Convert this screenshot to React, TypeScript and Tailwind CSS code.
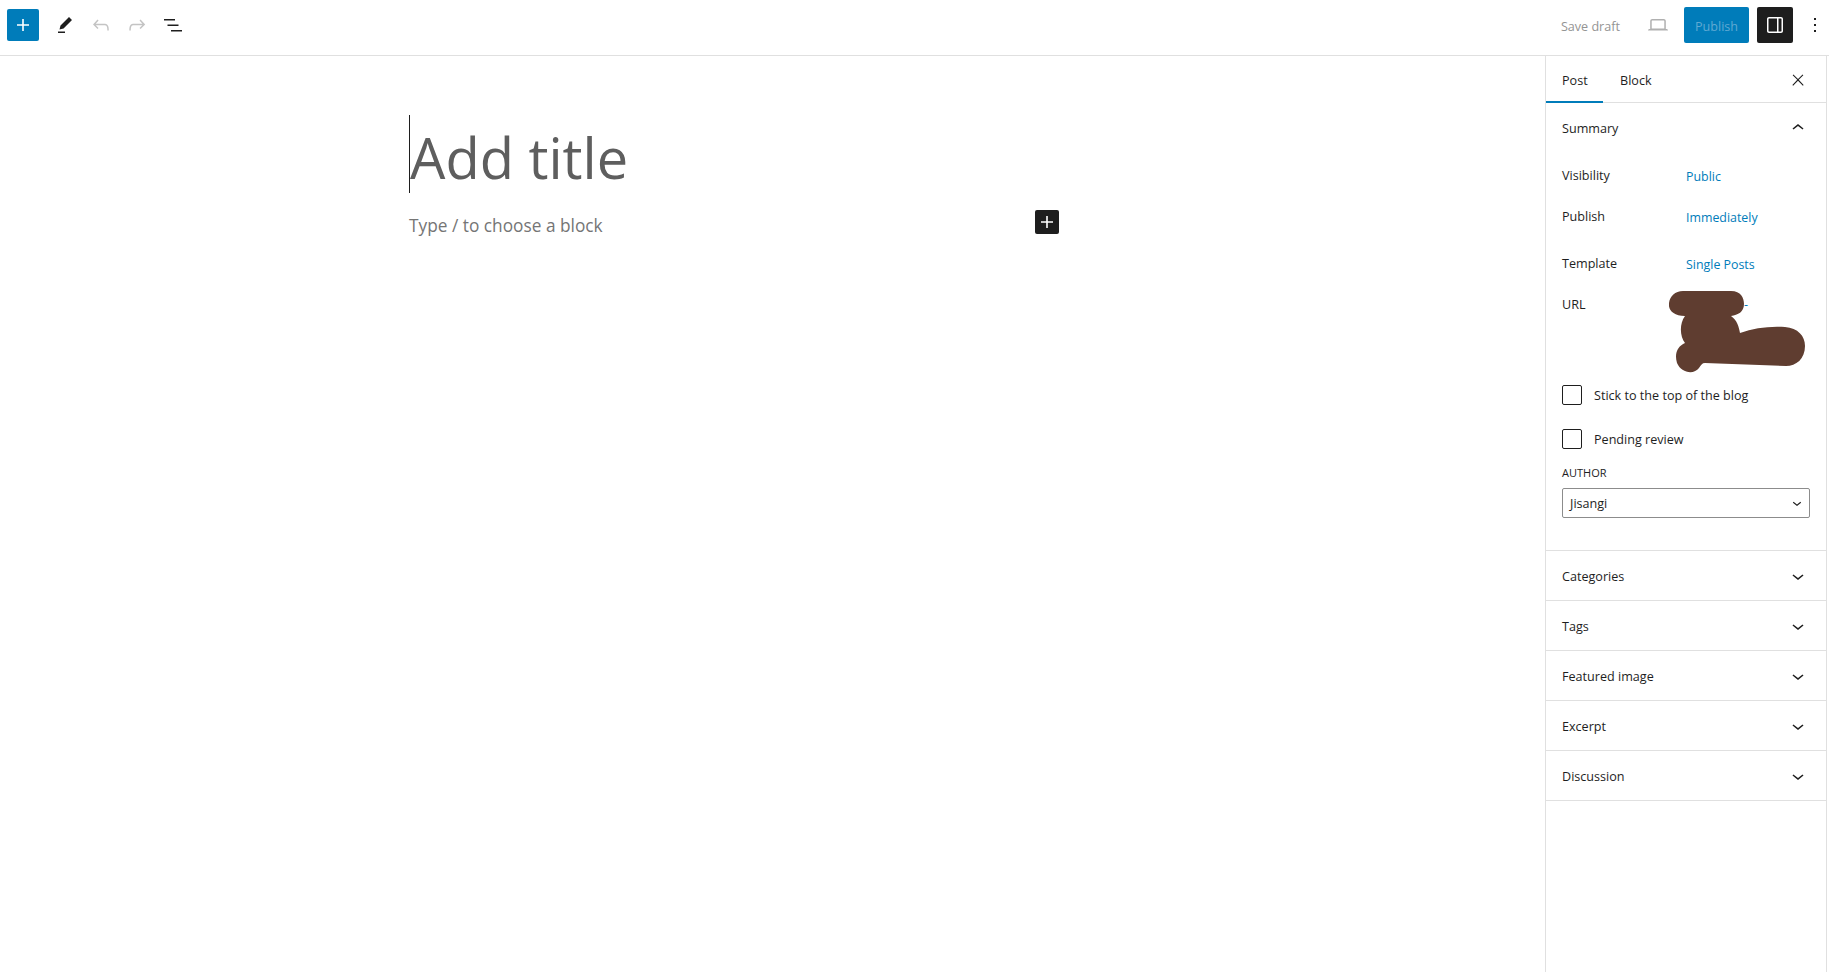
import React from "react";

const FONT = "font-['Open_Sans','Noto_Sans',sans-serif]";

// Gutenberg icon paths
const ICONS = {
  plus: "M18 11.2h-5.2V6h-1.6v5.2H6v1.6h5.2V18h1.6v-5.2H18z",
  edit: "m19 7-3-3-8.5 8.5-1 4 4-1L19 7Zm-7 11.5H5V20h7v-1.5Z",
  undo: "M18.3 11.7c-.6-.6-1.4-.9-2.3-.9H6.7l2.9-3.3-1.1-1-4.5 5L8.5 16l1-1-2.7-2.7H16c.5 0 .9.2 1.3.5 1 1 1 3.4 1 4.5v.3h1.5v-.2c0-1.5 0-4.3-1.5-5.7z",
  redo: "M15.6 6.5l-1.1 1 2.9 3.3H8c-.9 0-1.7.3-2.3.9-1.4 1.5-1.4 4.2-1.4 5.6v.2h1.5v-.3c0-1.1 0-3.5 1-4.5.3-.3.7-.5 1.3-.5h9.2L14.5 15l1.1 1.1 4.6-4.6-4.6-5z",
  list: "M3 6h11v1.5H3V6Zm3.5 5.5h11V13h-11v-1.5ZM21 17H10v1.5h11V17Z",
  laptop: "M20.5 16h-.7V8c0-1.1-.9-2-2-2H6.2c-1.1 0-2 .9-2 2v8h-.7c-.8 0-1.5.7-1.5 1.5h20c0-.8-.7-1.5-1.5-1.5zM5.7 8c0-.3.2-.5.5-.5h11.6c.3 0 .5.2.5.5v7.6H5.7V8z",
  drawer: "M18 4H6c-1.1 0-2 .9-2 2v12c0 1.1.9 2 2 2h12c1.1 0 2-.9 2-2V6c0-1.1-.9-2-2-2zm-4 14.5H6c-.3 0-.5-.2-.5-.5V6c0-.3.2-.5.5-.5h8v13zm4.5-.5c0 .3-.2.5-.5.5h-2.5v-13H18c.3 0 .5.2.5.5v12z",
  more: "M13 19h-2v-2h2v2zm0-6h-2v-2h2v2zm0-6h-2V5h2v2z",
  close: "M13 11.8l6.1-6.3-1-1-6.1 6.2-6.1-6.2-1 1 6.1 6.3-6.5 6.7 1 1 6.5-6.6 6.5 6.6 1-1z",
  up: "M6.5 12.4L12 8l5.5 4.4-.9 1.2L12 10l-4.5 3.6-1-1.2z",
  down: "M17.5 11.6L12 16l-5.5-4.4.9-1.2L12 14l4.5-3.6 1 1.2z",
};

const Icon = ({ d, size = 24, className = "" }: { d: string; size?: number; className?: string }) => (
  <svg width={size} height={size} viewBox="0 0 24 24" fill="currentColor" className={className}>
    <path d={d} />
  </svg>
);

const SummaryRow = ({ label, value, className }: { label: string; value: string; className: string }) => (
  <div className={`flex items-center ${className}`}>
    <span className="w-[124px] shrink-0">{label}</span>
    <span className="text-[#007cba] text-[12.4px] pt-[3px]">{value}</span>
  </div>
);

const Check = ({ label, className }: { label: string; className: string }) => (
  <div className={`flex items-center gap-[12px] ${className}`}>
    <span className="w-[20px] h-[20px] border border-[#1e1e1e] rounded-[2px] bg-white" />
    <span className="pt-[3px]">{label}</span>
  </div>
);

const CollapsedPanel = ({ title }: { title: string }) => (
  <div className="h-[50px] border-b border-[#e0e0e0] pl-[16px] pr-[16px] flex items-center justify-between font-medium text-[#1e1e1e]">
    <span className="pt-[3px]">{title}</span>
    <Icon d={ICONS.down} />
  </div>
);

export default function App() {
  return (
    <div className={`h-[972px] flex flex-col bg-white text-[#1e1e1e] text-[12.6px] overflow-hidden ${FONT}`}>
      {/* Top bar */}
      <header className="h-[56px] shrink-0 border-b border-[#e0e0e0] flex items-center justify-between">
        <div className="flex items-center pl-[7px] -mt-[5px]">
          <button className="w-[32px] h-[32px] rounded-[2px] bg-[#007cba] text-white flex items-center justify-center">
            <Icon d={ICONS.plus} />
          </button>
          <span className="ml-[14px] w-[24px] text-[#1e1e1e]"><Icon d={ICONS.edit} /></span>
          <span className="ml-[12px] w-[24px] text-[#c4c4c4]"><Icon d={ICONS.undo} /></span>
          <span className="ml-[12px] w-[24px] text-[#c4c4c4]"><Icon d={ICONS.redo} /></span>
          <span className="ml-[12px] w-[24px] text-[#1e1e1e]"><Icon d={ICONS.list} /></span>
        </div>
        <div className="flex items-center -mt-[5px]">
          <span className="text-[#949494] pt-[4px]">Save draft</span>
          <span className="ml-[26px] text-[#b0b0b0]"><Icon d={ICONS.laptop} /></span>
          <button className="ml-[14px] w-[65px] h-[36px] rounded-[2px] bg-[#007cba] text-[#5fa9d3] pt-[4px]">Publish</button>
          <button className="ml-[8px] w-[36px] h-[36px] rounded-[2px] bg-[#1e1e1e] text-white flex items-center justify-center">
            <Icon d={ICONS.drawer} />
          </button>
          <span className="ml-[10px] mr-[2px]"><Icon d={ICONS.more} /></span>
        </div>
      </header>

      <div className="flex flex-1 min-h-0">
        {/* Editor canvas */}
        <main className="flex-1 pl-[409px] pt-[59px]">
          <div className="w-[650px]">
            <div className="h-[78px] flex items-center border-l border-[#1e1e1e] text-[56px] leading-none text-[#5e5e5e] pt-[5px]">
              Add title
            </div>
            <div className="mt-[20px] h-[24px] flex items-center justify-between text-[17.3px] text-[#757575]">
              <span className="pt-[2px]">Type / to choose a block</span>
              <span className="w-[24px] h-[24px] rounded-[2px] bg-[#1e1e1e] text-white flex items-center justify-center -mt-[6px]">
                <Icon d={ICONS.plus} />
              </span>
            </div>
          </div>
        </main>

        {/* Settings sidebar */}
        <aside className="relative w-[282px] mr-[2px] shrink-0 border-l border-r border-[#e0e0e0]">
          <div className="h-[47px] border-b border-[#e0e0e0] flex items-stretch justify-between pr-[19px]">
            <div className="flex">
              <span className="w-[57px] h-[47px] border-b-2 border-[#007cba] pl-[16px] pt-[5px] flex items-center font-medium">Post</span>
              <span className="ml-[17px] pt-[5px] flex items-center font-medium">Block</span>
            </div>
            <span className="flex items-center mt-[1px]"><Icon d={ICONS.close} size={18} /></span>
          </div>

          <section className="h-[448px] border-b border-[#e0e0e0] px-[16px]">
            <div className="h-[50px] flex items-center justify-between font-medium">
              <span className="pt-[2px]">Summary</span>
              <Icon d={ICONS.up} />
            </div>
            <SummaryRow label="Visibility" value="Public" className="h-[36px] mt-[5px]" />
            <SummaryRow label="Publish" value="Immediately" className="h-[36px] mt-[5px]" />
            <SummaryRow label="Template" value="Single Posts" className="h-[36px] mt-[11px]" />
            <div className="flex h-[36px] items-center mt-[5px]">
              <span className="w-[124px] shrink-0">URL</span>
              <span className="text-[#007cba] pl-[58px]">-</span>
            </div>
            <Check label="Stick to the top of the blog" className="h-[20px] mt-[62px]" />
            <Check label="Pending review" className="h-[20px] mt-[24px]" />
            <div className="mt-[17px] h-[15px] flex items-center text-[11px] font-medium">AUTHOR</div>
            <div className="mt-[7px] w-[248px] h-[30px] border border-[#8c8c8c] rounded-[2px] pl-[7px] pr-[3px] flex items-center justify-between">
              <span className="pt-[3px]">Jisangi</span>
              <Icon d={ICONS.down} size={18} />
            </div>
          </section>

          {["Categories", "Tags", "Featured image", "Excerpt", "Discussion"].map((title) => (
            <CollapsedPanel key={title} title={title} />
          ))}

          {/* Paint smudge over the URL value */}
          <svg className="absolute left-[123px] top-[235px]" width="140" height="84" viewBox="0 0 140 84">
            <path
              d="M14 0H62C72 0 75 7 75 13C75 21 69 24 62 25C68 29 70 36 71 42C85 37 100 35 116 36C129 37 136 45 136 55C136 68 127 75 117 75L36 72C33 72 32 74 30 77C25 84 12 82 8 72C5 62 9 55 16 52C11 46 10 33 16 25C4 25 -1 19 0 12C1 5 6 0 14 0Z"
              fill="#5f3d30"
            />
          </svg>
        </aside>
      </div>
    </div>
  );
}
